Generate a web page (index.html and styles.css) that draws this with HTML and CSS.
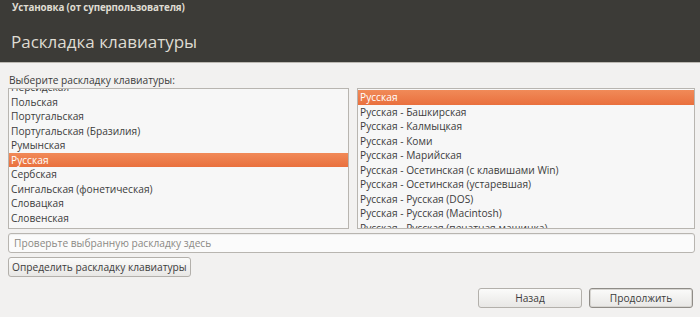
FILE: index.html
```html
<!DOCTYPE html>
<html lang="ru">
<head>
<meta charset="utf-8">
<title>Раскладка клавиатуры</title>
<link rel="stylesheet" href="styles.css">
</head>
<body>
<div class="window">
  <header class="header">
    <div class="wm-title">Установка (от суперпользователя)</div>
    <h1 class="page-title">Раскладка клавиатуры</h1>
  </header>
  <main class="content">
    <div class="prompt">Выберите раскладку клавиатуры:</div>
    <div class="lists">
      <div class="list list-left">
        <ul class="rows rows-scrolled">
          <li>Персидская</li>
          <li>Польская</li>
          <li>Португальская</li>
          <li>Португальская (Бразилия)</li>
          <li>Румынская</li>
          <li class="selected">Русская</li>
          <li>Сербская</li>
          <li>Сингальская (фонетическая)</li>
          <li>Словацкая</li>
          <li>Словенская</li>
          <li>Суахили (Кения)</li>
        </ul>
      </div>
      <div class="list list-right">
        <ul class="rows">
          <li class="selected">Русская</li>
          <li>Русская - Башкирская</li>
          <li>Русская - Калмыцкая</li>
          <li>Русская - Коми</li>
          <li>Русская - Марийская</li>
          <li>Русская - Осетинская (с клавишами Win)</li>
          <li>Русская - Осетинская (устаревшая)</li>
          <li>Русская - Русская (DOS)</li>
          <li>Русская - Русская (Macintosh)</li>
          <li>Русская - Русская (печатная машинка)</li>
        </ul>
      </div>
    </div>
    <input class="entry" type="text" placeholder="Проверьте выбранную раскладку здесь">
    <div class="detect-row">
      <button class="btn btn-detect">Определить раскладку клавиатуры</button>
    </div>
    <div class="nav-row">
      <button class="btn btn-nav">Назад</button>
      <button class="btn btn-nav btn-default">Продолжить</button>
    </div>
  </main>
</div>
</body>
</html>
```
FILE: styles.css
```css
* { box-sizing: border-box; }
html, body {
  margin: 0;
  padding: 0;
  width: 700px;
  height: 317px;
  overflow: hidden;
  background: #f2f1f0;
  font-family: "Open Sans", "Noto Sans", "DejaVu Sans", sans-serif;
  font-size: 10.2px;
  color: #3c3c3c;
}
.window {
  display: flex;
  flex-direction: column;
  height: 317px;
}
.header {
  height: 63px;
  background: #3c3b37;
  border-bottom: 1px solid #bcb9b3;
  padding: 1px 0 0 12px;
  color: #dfdbd2;
}
.wm-title {
  font-weight: bold;
  font-size: 9.8px;
  letter-spacing: -0.15px;
  line-height: 14px;
}
.page-title {
  margin: 17px 0 0 -1px;
  font-weight: normal;
  font-size: 17px;
  line-height: 20px;
  color: #dfdbd2;
}
.content {
  padding: 10px 5px 0 8px;
  display: flex;
  flex-direction: column;
}
.prompt {
  padding-left: 1px;
  line-height: 14px;
  height: 15px;
}
.lists {
  display: flex;
  gap: 8px;
  height: 141px;
}
.list {
  border: 1px solid #b8b5b0;
  background: #f7f7f7;
  overflow: hidden;
}
.list-left { width: 341px; }
.list-right { flex: 1; padding-top: 1px; }
.rows {
  list-style: none;
  margin: 0;
  padding: 0;
}
.rows-scrolled { margin-top: -9px; }
.rows li {
  height: 14.5px;
  line-height: 14.5px;
  padding-left: 2px;
  white-space: nowrap;
  color: #3c3c3c;
}
.rows li.selected {
  background: linear-gradient(#f18a58, #e9703e);
  color: #ffffff;
}
.entry {
  margin-top: 4px;
  height: 20px;
  border: 1px solid #b8b5b0;
  border-radius: 3px;
  background: #fbfbfb;
  padding: 0 0 0 5px;
  font: inherit;
  color: #3c3c3c;
  width: 687px;
  box-shadow: inset 0 1px 1px rgba(0,0,0,0.06);
}
.entry::placeholder { color: #8b8985; }
.detect-row {
  margin-top: 4px;
  display: flex;
}
.btn {
  font: inherit;
  color: #3c3c3c;
  border: 1px solid #b3b0ab;
  border-radius: 3px;
  background: linear-gradient(#fbfbfa, #e8e7e5);
  height: 20px;
  padding: 0 3px;
  line-height: 17px;
}
.btn-detect { padding: 0 3px; }
.nav-row {
  margin-top: 11px;
  display: flex;
  justify-content: flex-end;
  gap: 7px;
  padding-right: 2px;
}
.btn-nav { width: 104px; }
.btn-default {
  border-color: #8f8c87;
  box-shadow: inset 0 0 0 1px #d7d5d1;
}
```
